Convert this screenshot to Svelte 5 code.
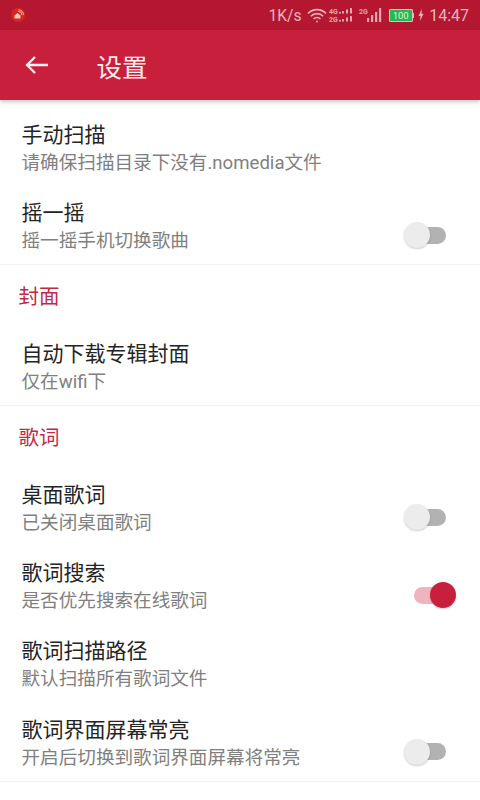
<script>
  const groups = [
    {
      items: [
        { title: '手动扫描', sub: '请确保扫描目录下没有.nomedia文件' },
        { title: '摇一摇', sub: '摇一摇手机切换歌曲', toggle: 'off' }
      ]
    },
    {
      name: '封面',
      items: [{ title: '自动下载专辑封面', sub: '仅在wifi下' }]
    },
    {
      name: '歌词',
      items: [
        { title: '桌面歌词', sub: '已关闭桌面歌词', toggle: 'off' },
        { title: '歌词搜索', sub: '是否优先搜索在线歌词', toggle: 'on' },
        { title: '歌词扫描路径', sub: '默认扫描所有歌词文件' },
        { title: '歌词界面屏幕常亮', sub: '开启后切换到歌词界面屏幕将常亮', toggle: 'off' }
      ]
    }
  ];
</script>

<div class="page">
  <div class="status">
    <svg class="app-icon" width="14" height="14" viewBox="0 0 14 14">
      <circle cx="7" cy="7" r="7" fill="#d8261f" />
      <path d="M3.500 10.500V7.500L6.500 5l3 2.500v3z" fill="#f6c9c0" />
      <path d="M7 3.200a4 4 0 0 1 4 4M7.500 1.800a5.500 5.500 0 0 1 5 5" fill="none" stroke="#f6c9c0" stroke-width="0.900" />
    </svg>
    <div class="status-right">
      <span class="speed">1K/s</span>
      <svg class="wifi" width="20" height="15" viewBox="0 0 20 15" fill="none" stroke="#e9b5bf" stroke-width="1.600">
        <path d="M1 5.500a12.500 12.500 0 0 1 18 0" />
        <path d="M3.800 8.300a8.500 8.500 0 0 1 12.400 0" />
        <path d="M6.600 11a4.500 4.500 0 0 1 6.800 0" />
        <circle cx="10" cy="13.500" r="0.900" fill="#e9b5bf" stroke="none" />
      </svg>
      <svg class="dual" width="25" height="16" viewBox="0 0 25 16" fill="#e2a5b1">
        <text x="0" y="6.500" class="tiny">4G</text>
        <text x="0" y="14.500" class="tiny">2G</text>
        <rect x="10" y="5" width="2" height="1.500" /><rect x="13" y="4" width="2" height="2.500" /><rect x="17" y="2.500" width="2" height="4" /><rect x="21" y="1" width="2" height="5.500" />
        <rect x="10" y="13" width="2" height="1.500" /><rect x="13" y="12" width="2" height="2.500" /><rect x="17" y="10.500" width="2" height="4" /><rect x="21" y="9" width="2" height="5.500" />
      </svg>
      <svg class="single" width="24" height="16" viewBox="0 0 24 16" fill="#e2a5b1">
        <text x="0" y="6.500" class="tiny">2G</text>
        <rect x="8" y="11" width="2.200" height="4" /><rect x="12" y="8" width="2.200" height="7" /><rect x="16" y="5" width="2.200" height="10" /><rect x="20" y="1" width="2.200" height="14" />
      </svg>
      <div class="battery"><div class="cell"><span>100</span></div><i></i></div>
      <svg class="bolt" width="6" height="12" viewBox="0 0 6 12"><path d="M3.800 0L0.500 7h2L2 12l3.500-7.200h-2z" fill="#e9b5bf" /></svg>
      <span class="time">14:47</span>
    </div>
  </div>

  <header class="toolbar">
    <svg width="26" height="20" viewBox="0 0 26 20" fill="none" stroke="#fbeef0" stroke-width="2.300">
      <path d="M24 10H3M11 2l-8 8 8 8" />
    </svg>
    <h1>设置</h1>
  </header>

  <main>
    {#each groups as group}
      <section>
        {#if group.name}
          <h2>{group.name}</h2>
        {/if}
        {#each group.items as item}
          <div class="row">
            <div class="text">
              <div class="title">{item.title}</div>
              <div class="sub">{item.sub}</div>
            </div>
            {#if item.toggle}
              <div class="switch {item.toggle}">
                <span class="thumb"></span>
              </div>
            {/if}
          </div>
        {/each}
      </section>
    {/each}
  </main>
</div>

<style>
  :global(body) {
    background: #fff;
  }

  .page {
    width: 480px;
    height: 800px;
    overflow: hidden;
    background: #fff;
    font-family: Roboto, "Noto Sans CJK SC", sans-serif;
  }

  .status {
    height: 30px;
    background: #b4172f;
    display: flex;
    align-items: center;
    justify-content: space-between;
    padding: 0 11px;
    color: #e9b5bf;
  }

  .status-right {
    display: flex;
    align-items: center;
  }

  .speed {
    font-size: 15.700px;
  }

  .time {
    font-size: 16px;
    margin-left: 5px;
  }

  .wifi {
    margin-left: 5px;
  }

  .dual {
    margin-left: 2px;
  }

  .single {
    margin-left: 5px;
  }

  .tiny {
    font-size: 7px;
    font-weight: 700;
  }

  .battery {
    display: flex;
    align-items: center;
    margin-left: 6px;
  }

  .cell {
    width: 22px;
    height: 11px;
    border: 1px solid #e9b5bf;
    border-radius: 1px;
    background: #25b85a;
    font-size: 9.500px;
    line-height: 11px;
    text-align: center;
    color: #dff5dc;
  }

  .battery i {
    width: 1.500px;
    height: 5px;
    background: #e9b5bf;
  }

  .bolt {
    margin-left: 4px;
  }

  .toolbar {
    position: relative;
    height: 70px;
    box-sizing: border-box;
    background: #c8203c;
    display: flex;
    align-items: center;
    padding: 0 0 0 24px;
    box-shadow: 0 2px 4px rgba(0, 0, 0, 0.22);
  }

  h1 {
    margin: 0 0 0 46.500px;
    font-size: 25.500px;
    font-weight: 400;
    color: #fbeef0;
  }

  main {
    padding-top: 8px;
  }

  section {
    border-bottom: 1px solid #f3f3f3;
  }

  h2 {
    margin: 0;
    height: 62px;
    padding: 18.500px 0 0 18.500px;
    box-sizing: border-box;
    font-size: 20.500px;
    line-height: 27px;
    font-weight: 400;
    color: #bf2a47;
  }

  .row {
    height: 78.100px;
    box-sizing: border-box;
    padding: 13px 22px 0 21.500px;
    display: flex;
    align-items: center;
    justify-content: space-between;
  }

  .text {
    align-self: flex-start;
  }

  .title {
    font-size: 21px;
    line-height: 28px;
    color: #242424;
  }

  .sub {
    font-size: 18.600px;
    line-height: 28px;
    color: #808080;
  }

  .switch {
    position: relative;
    width: 32px;
    height: 17px;
    border-radius: 9px;
    margin: 7px 12px 0 0;
    background: #b2b2b2;
  }

  .switch.on {
    background: #eeb4c0;
  }

  .thumb {
    position: absolute;
    top: -4.500px;
    left: -10px;
    width: 26px;
    height: 26px;
    border-radius: 50%;
    background: #ececec;
    box-shadow: 0 1px 2px rgba(0, 0, 0, 0.2);
  }

  .switch.on .thumb {
    left: 16px;
    background: #c8203c;
  }
</style>
